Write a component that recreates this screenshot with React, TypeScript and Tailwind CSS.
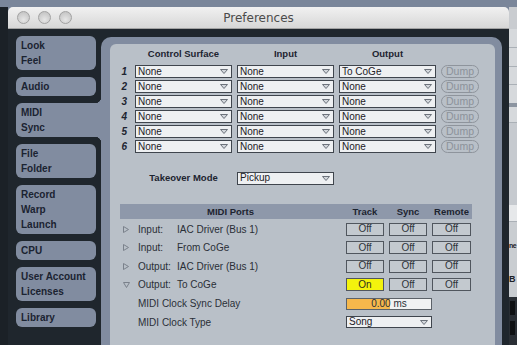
import React from "react";

const tabs = [
  { lines: ["Look", "Feel"] },
  { lines: ["Audio"] },
  { lines: ["MIDI", "Sync"], active: true },
  { lines: ["File", "Folder"] },
  { lines: ["Record", "Warp", "Launch"] },
  { lines: ["CPU"] },
  { lines: ["User Account", "Licenses"] },
  { lines: ["Library"] },
];

const surfaceRows = [
  { n: "1", output: "To CoGe" },
  { n: "2", output: "None" },
  { n: "3", output: "None" },
  { n: "4", output: "None" },
  { n: "5", output: "None" },
  { n: "6", output: "None" },
];

const ports = [
  { kind: "Input:", name: "IAC Driver (Bus 1)", open: false, track: false, h: "h-[18px]" },
  { kind: "Input:", name: "From CoGe", open: false, track: false, h: "h-[19px]" },
  { kind: "Output:", name: "IAC Driver (Bus 1)", open: false, track: false, h: "h-[18px]" },
  { kind: "Output:", name: "To CoGe", open: true, track: true, h: "h-[19px]" },
];

function Arrow() {
  return (
    <svg width="8" height="5" viewBox="0 0 8 5" className="shrink-0">
      <path d="M0.5 0.5H7.5L4 4.5Z" fill="#d3d7dc" stroke="#6c727b" strokeWidth="1" strokeLinejoin="round" />
    </svg>
  );
}

function Dropdown({ value, className }: { value: string; className: string }) {
  return (
    <div className={`flex items-center bg-[#eef0f2] border border-[#3f454d] pl-[2px] pr-[3px] ${className}`}>
      <span className="flex-1 text-[10px] leading-none text-[#1c2026] truncate">{value}</span>
      <Arrow />
    </div>
  );
}

function Toggle({ on = false }: { on?: boolean }) {
  return (
    <div
      className={
        on
          ? "h-[13px] flex items-center justify-center border border-[#50565e] bg-[#f3f30d] text-[10px] leading-none text-[#2b2f20]"
          : "h-[13px] flex items-center justify-center border border-[#50565e] bg-[#c3c9cf] text-[10px] leading-none text-[#2f343a]"
      }
    >
      {on ? "On" : "Off"}
    </div>
  );
}

function Disclosure({ open }: { open: boolean }) {
  return open ? (
    <svg width="7" height="6" viewBox="0 0 7 6" className="shrink-0">
      <path d="M0.5 0.5H6.5L3.5 5.5Z" fill="none" stroke="#7a818b" strokeWidth="1" strokeLinejoin="round" />
    </svg>
  ) : (
    <svg width="6" height="7" viewBox="0 0 6 7" className="shrink-0">
      <path d="M0.5 0.5L5.5 3.5L0.5 6.5Z" fill="none" stroke="#7a818b" strokeWidth="1" strokeLinejoin="round" />
    </svg>
  );
}

export default function App() {
  return (
    <div className="w-[517px] h-[345px] overflow-hidden flex flex-col bg-[#7a869a] font-['Liberation_Sans',Arial,sans-serif]">
      <div className="h-[7px] shrink-0" />
      <div className="flex flex-1 min-h-0">
        {/* window behind, left */}
        <div className="w-[8px] shrink-0 bg-[#1b2127]" />

        {/* preferences window */}
        <div className="w-[501px] shrink-0 flex flex-col">
          <div className="h-[22px] shrink-0 grid grid-cols-[1fr_auto_1fr] items-center rounded-t-[5px] bg-[linear-gradient(#f1f1f1,#d7d7d7)] border-b border-[#a3a3a3]">
            <div className="flex items-center gap-[8px] pl-[9px]">
              <span className="w-[13px] h-[13px] rounded-full border border-[#a2a2a2] bg-[radial-gradient(circle_at_50%_70%,#e6e6e6,#bdbdbd)]" />
              <span className="w-[13px] h-[13px] rounded-full border border-[#a2a2a2] bg-[radial-gradient(circle_at_50%_70%,#e6e6e6,#bdbdbd)]" />
              <span className="w-[13px] h-[13px] rounded-full border border-[#a2a2a2] bg-[radial-gradient(circle_at_50%_70%,#e6e6e6,#bdbdbd)]" />
            </div>
            <span className="font-['DejaVu_Sans',sans-serif] text-[12px] text-[#4b4b4b] leading-none">Preferences</span>
            <div />
          </div>

          <div className="flex-1 flex bg-[#1f262d]">
            {/* sidebar */}
            <div className="w-[93px] shrink-0 flex flex-col gap-[7px] pl-[8px] pt-[7px]">
              {tabs.map((t) => (
                <div
                  key={t.lines[0]}
                  className={
                    t.active
                      ? "relative w-[85px] rounded-l-[6px] bg-[#818ca0] pl-[5px] py-[2px] text-[10px] leading-[15px] font-bold text-[#1b2331]"
                      : "w-[80px] rounded-[6px] bg-[#818ca0] pl-[5px] py-[2px] text-[10px] leading-[15px] font-bold text-[#1b2331]"
                  }
                >
                  {t.lines.map((l) => (
                    <div key={l}>{l}</div>
                  ))}
                  {t.active && (
                    <>
                      <span className="absolute right-0 top-[-6px] w-[6px] h-[6px] bg-[radial-gradient(circle_at_0_0,#1f262d_6px,#818ca0_6.5px)]" />
                      <span className="absolute right-0 top-full w-[6px] h-[6px] bg-[radial-gradient(circle_at_0_100%,#1f262d_6px,#818ca0_6.5px)]" />
                    </>
                  )}
                </div>
              ))}
            </div>

            {/* main panel */}
            <div className="w-[401px] shrink-0 pt-[8px] flex flex-col">
              <div className="flex-1 flex flex-col rounded-t-[10px] bg-[#818ca0] pt-[7px] pl-[9px] pr-[7px]">
                <div className="flex-1 rounded-t-[6px] bg-[#b9c0c8] pt-[4px]">
                  {/* control surfaces */}
                  <div className="grid grid-cols-[20px_97px_97px_97px_38px] gap-x-[5px] gap-y-[2px]">
                    <div />
                    <div className="h-[15px] leading-[12px] text-center text-[9.5px] font-bold text-[#1d2430]">Control Surface</div>
                    <div className="h-[15px] leading-[12px] text-center text-[9.5px] font-bold text-[#1d2430]">Input</div>
                    <div className="h-[15px] leading-[12px] text-center text-[9.5px] font-bold text-[#1d2430]">Output</div>
                    <div />
                    {surfaceRows.map((r) => (
                      <React.Fragment key={r.n}>
                        <div className="h-[13px] flex items-center justify-end pr-[3px] text-[10px] font-bold italic text-[#1d2430]">{r.n}</div>
                        <Dropdown value="None" className="h-[13px]" />
                        <Dropdown value="None" className="h-[13px]" />
                        <Dropdown value={r.output} className="h-[13px]" />
                        <div className="h-[13px] flex items-center justify-center rounded-full border border-[#8e949c] text-[10.5px] leading-none text-[#8c929a]">
                          Dump
                        </div>
                      </React.Fragment>
                    ))}
                  </div>

                  {/* takeover */}
                  <div className="mt-[18px] grid grid-cols-[20px_97px_97px] gap-x-[5px] items-center">
                    <div />
                    <div className="text-center text-[9.5px] font-bold text-[#1d2430]">Takeover Mode</div>
                    <Dropdown value="Pickup" className="h-[13px]" />
                  </div>

                  {/* midi ports */}
                  <div className="ml-[10px] w-[352px] mt-[19px]">
                    <div className="h-[15px] grid grid-cols-[221px_38px_38px_39px] gap-x-[5px] items-center bg-[#8e98aa] text-[9.5px] font-bold text-[#1d2430] text-center">
                      <div>MIDI Ports</div>
                      <div>Track</div>
                      <div>Sync</div>
                      <div>Remote</div>
                    </div>
                    <div className="mt-[1px]">
                      {ports.map((p) => (
                        <div key={p.kind + p.name} className={`${p.h} grid grid-cols-[221px_38px_38px_39px] gap-x-[5px] items-center`}>
                          <div className="flex items-center pl-[3px] text-[10px] text-[#2a2f37]">
                            <Disclosure open={p.open} />
                            <span className={p.open ? "ml-[8px] w-[39px]" : "ml-[9px] w-[39px]"}>{p.kind}</span>
                            <span>{p.name}</span>
                          </div>
                          <Toggle on={p.track} />
                          <Toggle />
                          <Toggle />
                        </div>
                      ))}
                      <div className="h-[19px] grid grid-cols-[221px_auto] gap-x-[5px] items-center">
                        <div className="pl-[18px] text-[10px] text-[#2a2f37]">MIDI Clock Sync Delay</div>
                        <div className="w-[86px] h-[12px] flex items-center justify-center border border-[#5c6269] bg-[linear-gradient(to_right,#f6b84c_51%,#f1f2f3_51%)] text-[10px] leading-none text-[#2a2f37]">
                          0.00 ms
                        </div>
                      </div>
                      <div className="h-[18px] grid grid-cols-[221px_auto] gap-x-[5px] items-center">
                        <div className="pl-[18px] text-[10px] text-[#2a2f37]">MIDI Clock Type</div>
                        <Dropdown value="Song" className="w-[86px] h-[12px]" />
                      </div>
                    </div>
                  </div>
                </div>
              </div>
            </div>
          </div>
        </div>

        {/* app behind, right */}
        <div className="w-[8px] shrink-0 flex flex-col overflow-hidden">
          <div className="h-[22px] bg-[#c9ccd0]" />
          <div className="h-[19px] bg-[#d6d9dc] border-b border-[#aab0b6]" />
          <div className="h-[19px] bg-[#d6d9dc] border-b border-[#aab0b6]" />
          <div className="h-[18px] bg-[#d6d9dc] border-b border-[#aab0b6]" />
          <div className="h-[18px] bg-[#d6d9dc]" />
          <div className="h-[4px] bg-[#8b94a0]" />
          <div className="h-[16px] bg-[#d6d9dc] border-b border-[#aab0b6]" />
          <div className="h-[82px] bg-[#c6cacf]" />
          <div className="h-[17px] bg-[#e6e8ea] border-b border-[#aab0b6]" />
          <div className="h-[75px] bg-[#c9cdd1] flex flex-col font-bold text-[#1d2127] leading-none">
            <span className="mt-[20px] text-[7px] tracking-[-0.5px] whitespace-nowrap">ne</span>
            <span className="mt-[26px] text-[9px] whitespace-nowrap">B</span>
          </div>
          <div className="flex-1 bg-[#2a2f35] flex flex-col gap-[6px] pt-[4px] pl-[1px]">
            <span className="w-[5px] h-[14px] bg-[#0f1113]" />
            <span className="w-[5px] h-[14px] bg-[#0f1113]" />
          </div>
        </div>
      </div>
    </div>
  );
}
